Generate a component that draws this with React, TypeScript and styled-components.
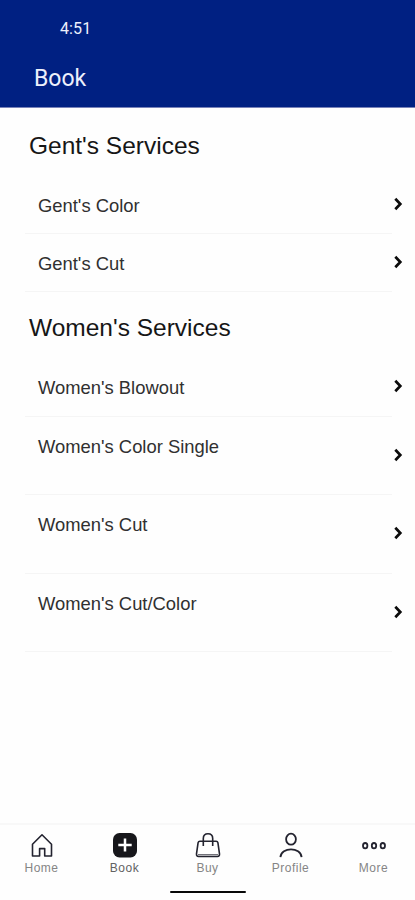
import React from "react";
import styled, { createGlobalStyle } from "styled-components";

const GlobalStyle = createGlobalStyle`
  * { box-sizing: border-box; }
  body { margin: 0; background: #fefefe; }
`;

const Screen = styled.div`
  width: 415px;
  height: 900px;
  display: flex;
  flex-direction: column;
  overflow: hidden;
  background: #fefefe;
  font-family: "Liberation Sans", Arial, sans-serif;
`;

const Header = styled.header`
  height: 108px;
  flex: none;
  display: flex;
  flex-direction: column;
  background: #002082;
  border-bottom: 1px solid #7882b8;
  color: #edf0fc;
  font-family: Roboto, sans-serif;
`;

const Clock = styled.div`
  height: 50px;
  padding: 19px 0 0 60px;
  font-size: 16px;
  line-height: 20px;
  font-weight: 400;
  letter-spacing: 0.1px;
`;

const Title = styled.h1`
  margin: 0;
  padding: 14px 0 0 34px;
  font-size: 23px;
  line-height: 30px;
  font-weight: 400;
`;

const Main = styled.main`
  flex: 1;
  display: flex;
  flex-direction: column;
`;

const SectionTitle = styled.h2<{ $height: number }>`
  margin: 0;
  height: ${(p) => p.$height}px;
  padding: ${(p) => p.$height - 45}px 0 0 29px;
  font-size: 24.5px;
  line-height: 30px;
  font-weight: 400;
  color: #161616;
`;

const List = styled.ul`
  margin: 0;
  padding: 0;
  list-style: none;
`;

const Row = styled.li<{ $height: number }>`
  height: ${(p) => p.$height}px;
  display: flex;
  padding-left: 25px;
`;

const RowLabel = styled.div`
  flex: 1;
  padding: 18px 0 0 13px;
  border-bottom: 1px solid #f5f5f5;
  font-size: 18.4px;
  line-height: 24px;
  color: #303030;
  white-space: nowrap;
`;

const RowArrow = styled.div`
  width: 23px;
  display: flex;
  align-items: center;
  padding: 0 0 3px 1px;
`;

const TabBar = styled.nav`
  height: 62px;
  flex: none;
  display: grid;
  grid-template-columns: repeat(5, 1fr);
  border-top: 2px solid #f8f8f8;
`;

const Tab = styled.div<{ $active?: boolean }>`
  display: flex;
  flex-direction: column;
  align-items: center;
  padding-top: 6px;
  font-size: 12px;
  line-height: 16px;
  letter-spacing: 0.5px;
  color: ${(p) => (p.$active ? "#626262" : "#858585")};

  svg { display: block; margin-bottom: 1px; overflow: visible; }
`;

const HomeIndicator = styled.div`
  width: 76px;
  height: 2px;
  margin: 6px 0 7px 170px;
  border-radius: 1px;
  background: #080808;
  flex: none;
`;

const Chevron = () => (
  <svg width="10" height="14" viewBox="0 0 10 14" fill="none" stroke="#0b0b0b" strokeWidth="2.7">
    <path d="M2.3 1.8 7.3 7l-5 5.2" />
  </svg>
);

const iconProps = {
  width: 28,
  height: 28,
  viewBox: "0 0 28 28",
  fill: "none",
  stroke: "#23232f",
  strokeWidth: 1.6,
  strokeLinejoin: "round" as const,
};

const HomeIcon = () => (
  <svg {...iconProps}>
    <path d="M4.5 25V13.2L14 3.8l9.5 9.4V25h-6.8v-7.4h-5.1V25z" />
  </svg>
);

const BookIcon = () => (
  <svg {...iconProps}>
    <rect x="2" y="2" width="24" height="24.5" rx="6.5" fill="#17171b" stroke="none" />
    <path d="M14 7.6v13M7.3 14.1h13.4" stroke="#fff" strokeWidth="2.5" />
  </svg>
);

const BagIcon = () => (
  <svg {...iconProps}>
    <path d="M5.9 10.2h16.2q1.5 0 1.8 1.4l1.6 11.3q.2 2.6-2 2.6h-19q-2.2 0-2-2.6l1.6-11.3q.3-1.4 1.8-1.4Z" />
    <path d="M9.3 15V7.4Q9.3 2.7 14 2.7t4.7 4.7V15" />
    <path d="M4 23.7h20" strokeWidth="0.8" />
  </svg>
);

const ProfileIcon = () => (
  <svg {...iconProps} strokeWidth={1.8}>
    <ellipse cx="14" cy="8.2" rx="4.9" ry="5.5" />
    <path d="M3.4 26.2c1-10.4 20.2-10.4 21.2 0" />
  </svg>
);

const MoreIcon = () => (
  <svg {...iconProps} strokeWidth={1.8}>
    <ellipse cx="5.2" cy="14.7" rx="2.2" ry="2.7" />
    <ellipse cx="14" cy="14.7" rx="2.2" ry="2.7" />
    <ellipse cx="22.8" cy="14.7" rx="2.2" ry="2.7" />
  </svg>
);

const sections = [
  {
    title: "Gent's Services",
    titleHeight: 68,
    rows: [
      { label: "Gent's Color", height: 58 },
      { label: "Gent's Cut", height: 58 },
    ],
  },
  {
    title: "Women's Services",
    titleHeight: 66,
    rows: [
      { label: "Women's Blowout", height: 59 },
      { label: "Women's Color Single", height: 78 },
      { label: "Women's Cut", height: 79 },
      { label: "Women's Cut/Color", height: 78 },
    ],
  },
];

const tabs = [
  { label: "Home", Icon: HomeIcon },
  { label: "Book", Icon: BookIcon, active: true },
  { label: "Buy", Icon: BagIcon },
  { label: "Profile", Icon: ProfileIcon },
  { label: "More", Icon: MoreIcon },
];

export default function App() {
  return (
    <Screen>
      <GlobalStyle />
      <Header>
        <Clock>4:51</Clock>
        <Title>Book</Title>
      </Header>
      <Main>
        {sections.map((section) => (
          <section key={section.title}>
            <SectionTitle $height={section.titleHeight}>{section.title}</SectionTitle>
            <List>
              {section.rows.map((row) => (
                <Row key={row.label} $height={row.height}>
                  <RowLabel>{row.label}</RowLabel>
                  <RowArrow><Chevron /></RowArrow>
                </Row>
              ))}
            </List>
          </section>
        ))}
      </Main>
      <TabBar>
        {tabs.map(({ label, Icon, active }) => (
          <Tab key={label} $active={active}>
            <Icon />
            {label}
          </Tab>
        ))}
      </TabBar>
      <HomeIndicator />
    </Screen>
  );
}
